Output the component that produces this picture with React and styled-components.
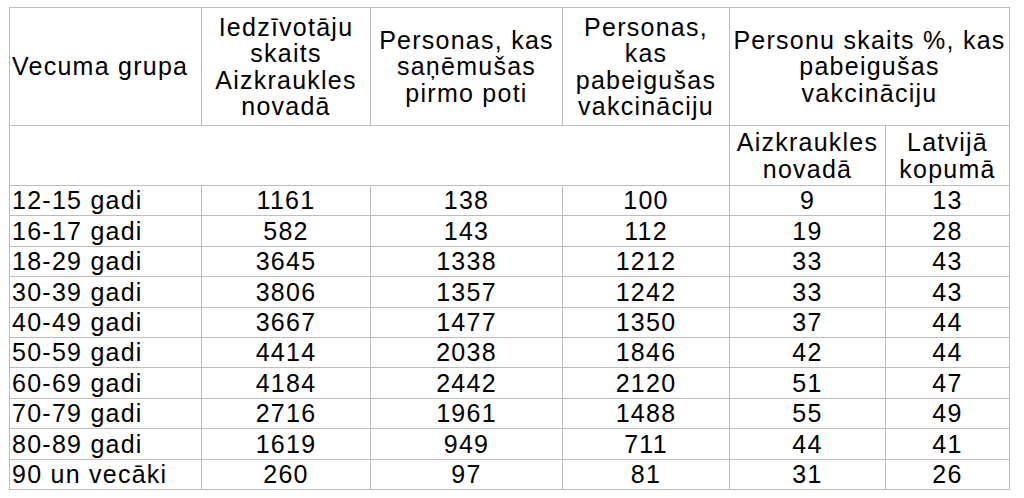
import React from "react";
import styled, { createGlobalStyle } from "styled-components";

const GlobalStyle = createGlobalStyle`
  html, body {
    margin: 0;
    padding: 0;
    background: #ffffff;
  }
  body {
    font-family: "Liberation Sans", Arial, sans-serif;
    color: #000;
  }
`;

const rows = [
  ["12-15 gadi", 1161, 138, 100, 9, 13],
  ["16-17 gadi", 582, 143, 112, 19, 28],
  ["18-29 gadi", 3645, 1338, 1212, 33, 43],
  ["30-39 gadi", 3806, 1357, 1242, 33, 43],
  ["40-49 gadi", 3667, 1477, 1350, 37, 44],
  ["50-59 gadi", 4414, 2038, 1846, 42, 44],
  ["60-69 gadi", 4184, 2442, 2120, 51, 47],
  ["70-79 gadi", 2716, 1961, 1488, 55, 49],
  ["80-89 gadi", 1619, 949, 711, 44, 41],
  ["90 un vecāki", 260, 97, 81, 31, 26],
];

const colWidths = [192, 169, 192, 167, 156, 124];

export default function App() {
  return (
    <>
      <GlobalStyle />
      <Page>
        <Table>
          <colgroup>
            {colWidths.map((w, i) => (
              <col key={i} style={{ width: w }} />
            ))}
          </colgroup>
          <thead>
            <HeadRow height={118}>
              <Cell align="left">Vecuma grupa</Cell>
              <Cell>Iedzīvotāju skaits Aizkraukles novadā</Cell>
              <Cell>Personas, kas saņēmušas pirmo poti</Cell>
              <Cell>Personas, kas pabeigušas vakcināciju</Cell>
              <Cell colSpan={2} tight>
                Personu skaits %, kas pabeigušas vakcināciju
              </Cell>
            </HeadRow>
            <HeadRow height={60}>
              <Cell colSpan={4} />
              <Cell>Aizkraukles novadā</Cell>
              <Cell>Latvijā kopumā</Cell>
            </HeadRow>
          </thead>
          <tbody>
            {rows.map((r) => (
              <DataRow key={r[0]}>
                <Cell align="left">{r[0]}</Cell>
                {r.slice(1).map((v, i) => (
                  <Cell key={i}>{v}</Cell>
                ))}
              </DataRow>
            ))}
          </tbody>
        </Table>
      </Page>
    </>
  );
}

const Page = styled.div`
  padding: 7px 0 0 9px;
`;

const Table = styled.table`
  border-collapse: collapse;
  table-layout: fixed;
  width: 1001px;
  font-size: 25px;
  letter-spacing: 1.25px;
  line-height: 26.5px;
`;

const HeadRow = styled.tr`
  height: ${(props) => props.height}px;
`;

const DataRow = styled.tr`
  height: 30.4px;
`;

const Cell = styled.td`
  border: 1px solid #bcbcbc;
  padding: ${(props) => (props.tight ? "0 1px" : "0 2px")};
  text-align: ${(props) => props.align || "center"};
  vertical-align: middle;
  color: #000;
  overflow: hidden;
`;
